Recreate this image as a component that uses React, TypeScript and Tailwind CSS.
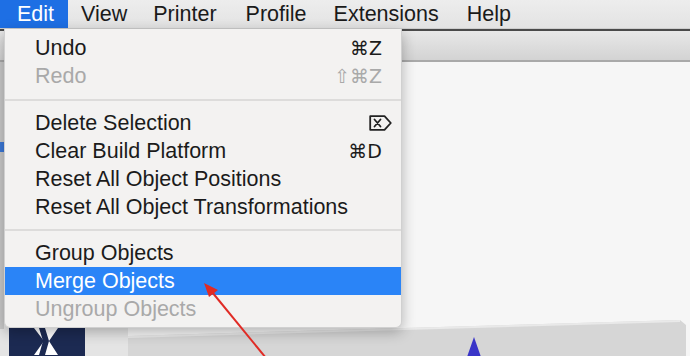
import React from "react";

const font = { fontFamily: '"Liberation Sans", Arial, "DejaVu Sans", sans-serif' };

function DeleteIcon() {
  return (
    <svg width="23" height="16" viewBox="0 0 23 16" fill="none">
      <path d="M1.2 1.2 H15.5 L21.8 8 L15.5 14.8 H1.2 Z" stroke="#222" strokeWidth="1.8" strokeLinejoin="round" />
      <path d="M5.5 4.5 L11.5 11.5 M11.5 4.5 L5.5 11.5" stroke="#222" strokeWidth="1.8" strokeLinecap="round" />
    </svg>
  );
}

type Item =
  | { label: string; shortcut?: React.ReactNode; icon?: boolean; disabled?: boolean; active?: boolean }
  | "sep18"
  | "sep19";

const items: Item[] = [
  { label: "Undo", shortcut: "⌘Z" },
  { label: "Redo", shortcut: "⇧⌘Z", disabled: true },
  "sep19",
  { label: "Delete Selection", shortcut: <DeleteIcon />, icon: true },
  { label: "Clear Build Platform", shortcut: "⌘D" },
  { label: "Reset All Object Positions" },
  { label: "Reset All Object Transformations" },
  "sep18",
  { label: "Group Objects" },
  { label: "Merge Objects", active: true },
  { label: "Ungroup Objects", disabled: true },
];

export default function App() {
  return (
    <div className="relative w-[690px] h-[356px] overflow-hidden bg-[#f6f6f6]" style={font}>
      {/* menu bar */}
      <div className="flex h-[29px] bg-gradient-to-b from-[#ededed] to-[#e3e3e3] border-b border-[#cdcdcd] text-[21.5px] leading-[29px] text-[#1a1a1a]">
        <div className="pl-[17px] pr-[14px] bg-[#1e6fe4] text-white">Edit</div>
        <div className="ml-[13px]">View</div>
        <div className="ml-[26px]">Printer</div>
        <div className="ml-[29px]">Profile</div>
        <div className="ml-[27px]">Extensions</div>
        <div className="ml-[28px]">Help</div>
      </div>

      {/* window behind */}
      <div className="flex flex-col h-[327px]">
        <div className="h-[2px] bg-[#4a4a4a]" />
        <div className="h-[31px] bg-gradient-to-b from-[#e8e8e8] to-[#d3d3d3] border-b-2 border-[#a9a9a9]" />
        <div className="relative flex-1 bg-[#f6f6f6]">
          <svg className="absolute inset-0" width="690" height="294" viewBox="0 63 690 294">
            <rect x="0" y="300" width="128" height="60" fill="#e4e4e4" />
            <polygon points="128,337 680,321 686,326 686,360 128,360" fill="#d6d6d6" />
            <polygon points="128,337 680,321 680,323 128,339" fill="#e9e9e9" />
            <rect x="9" y="328" width="76" height="30" fill="#1c2a52" />
            <polygon points="34,329 58,329 49,342 58,356 34,356 44,342" fill="#ffffff" />
            <polygon points="39,329 45,329 49,342 45,356 39,356 43,342" fill="#1c2a52" />
            <polygon points="474,338 467,358 481,358" fill="#3a35c8" />
            <rect x="0" y="60" width="4" height="270" fill="#c9c9c9" />
            <rect x="0" y="143" width="4" height="10" fill="#3b78d8" />
          </svg>
        </div>
      </div>

      {/* dropdown */}
      <div className="absolute left-[4px] top-[29px] w-[398px] h-[299px] bg-[#f3f2f1] rounded-b-[6px] shadow-[0_4px_14px_rgba(0,0,0,0.28)] border border-t-0 border-[#d0d0d0] py-[5px] text-[21.5px] leading-[28px]">
        {items.map((it, idx) => {
          if (it === "sep18" || it === "sep19") {
            return (
              <div key={idx} className={`flex items-center ${it === "sep18" ? "h-[18px]" : "h-[19px]"}`}>
                <div className="w-full h-[2px] bg-[#dddcdb]" />
              </div>
            );
          }
          const color = it.active
            ? "text-white bg-[#2a84f7]"
            : it.disabled
            ? "text-[#a9a9a9]"
            : "text-[#1b1b1b]";
          return (
            <div
              key={idx}
              className={`flex items-center justify-between h-[28px] pl-[30px] ${it.icon ? "pr-[9px]" : "pr-[19px]"} ${color}`}
            >
              <span>{it.label}</span>
              {it.shortcut && (
                <span
                  className="flex items-center"
                  style={{ fontFamily: '"DejaVu Sans", "Liberation Sans", sans-serif', fontSize: 19 }}
                >
                  {it.shortcut}
                </span>
              )}
            </div>
          );
        })}
      </div>

      {/* red arrow */}
      <svg className="absolute left-0 top-0 pointer-events-none" width="690" height="356">
        <line x1="212" y1="292" x2="266" y2="358" stroke="#e02b25" strokeWidth="2" />
        <polygon points="204,283 218,290 209,297" fill="#e02b25" />
      </svg>
    </div>
  );
}
